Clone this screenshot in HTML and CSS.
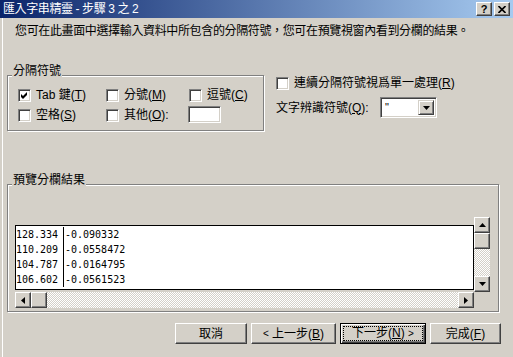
FILE: index.html
```html
<!DOCTYPE html>
<html lang="zh-Hant">
<head>
<meta charset="utf-8">
<title>匯入字串精靈</title>
<link rel="stylesheet" href="styles.css">
</head>
<body>
<div class="window">
  <div class="titlebar">
    <span class="title">匯入字串精靈 - 步驟 3 之 2</span>
    <div class="tbtns">
      <span class="tbtn help">?</span>
      <span class="tbtn close"><svg width="8" height="7" viewBox="0 0 8 7"><path d="M0.5 0 L7.5 7 M7.5 0 L0.5 7" stroke="#000" stroke-width="1.6"/></svg></span>
    </div>
  </div>

  <p class="intro">您可在此畫面中選擇輸入資料中所包含的分隔符號，您可在預覽視窗內看到分欄的結果。</p>

  <div class="options">
    <div class="group delim">
      <span class="legend">分隔符號</span>
      <div class="delim-grid">
        <label class="chk"><span class="cb"><svg width="11" height="11" viewBox="0 0 11 11"><path d="M2 4 L4 6 L8 2 L8 5 L4 9 L2 7 Z" fill="#000"/></svg></span><span>Tab 鍵(<u>T</u>)</span></label>
        <label class="chk"><span class="cb"></span><span>分號(<u>M</u>)</span></label>
        <label class="chk"><span class="cb"></span><span>逗號(<u>C</u>)</span></label>
        <label class="chk"><span class="cb"></span><span>空格(<u>S</u>)</span></label>
        <label class="chk"><span class="cb"></span><span>其他(<u>O</u>):</span></label>
        <span class="field"></span>
      </div>
    </div>
    <div class="right-opts">
      <label class="chk"><span class="cb"></span><span>連續分隔符號視爲單一處理(<u>R</u>)</span></label>
      <div class="qual">
        <span class="qual-label">文字辨識符號(<u>Q</u>):</span>
        <div class="combo">
          <span class="combo-val">"</span>
          <span class="combo-btn"><svg width="7" height="4" viewBox="0 0 7 4"><path d="M0 0 H7 L3.5 4 Z" fill="#000"/></svg></span>
        </div>
      </div>
    </div>
  </div>

  <div class="group preview">
    <span class="legend">預覽分欄結果</span>
    <div class="pv">
      <div class="pv-main">
        <div class="data">
          <div class="row"><span class="c1">128.334</span><span class="c2">-0.090332</span></div>
          <div class="row"><span class="c1">110.209</span><span class="c2">-0.0558472</span></div>
          <div class="row"><span class="c1">104.787</span><span class="c2">-0.0164795</span></div>
          <div class="row"><span class="c1">106.602</span><span class="c2">-0.0561523</span></div>
        </div>
      </div>
      <div class="vscroll">
        <span class="sbtn"><svg width="7" height="4" viewBox="0 0 7 4"><path d="M3.5 0 L7 4 H0 Z" fill="#000"/></svg></span>
        <span class="sbtn thumb"></span>
        <span class="track"></span>
        <span class="sbtn"><svg width="7" height="4" viewBox="0 0 7 4"><path d="M0 0 H7 L3.5 4 Z" fill="#000"/></svg></span>
      </div>
      <div class="hscroll">
        <span class="sbtn"><svg width="4" height="7" viewBox="0 0 4 7"><path d="M4 0 V7 L0 3.5 Z" fill="#000"/></svg></span>
        <span class="sbtn thumb"></span>
        <span class="track"></span>
        <span class="sbtn"><svg width="4" height="7" viewBox="0 0 4 7"><path d="M0 0 V7 L4 3.5 Z" fill="#000"/></svg></span>
      </div>
      <div class="corner"></div>
    </div>
  </div>

  <div class="buttons">
    <span class="btn w72">取消</span>
    <span class="btn w85"><span class="lt">&lt;</span>&nbsp;上一步(<u>B</u>)</span>
    <span class="btn w86 default"><span class="focus">下一步(<u>N</u>)&nbsp;<span class="lt">&gt;</span></span></span>
    <span class="btn w71">完成(<u>F</u>)</span>
  </div>
</div>
</body>
</html>
```
FILE: styles.css
```css
* { box-sizing: border-box; }
html, body { margin: 0; padding: 0; }
body {
  width: 513px;
  height: 357px;
  overflow: hidden;
  background: #d4d0c8;
  font-family: "Liberation Sans", "Noto Sans CJK TC", "Noto Sans CJK SC", sans-serif;
  font-size: 12px;
  color: #000;
  text-autospace: no-autospace;
}
u { text-decoration: underline; text-underline-offset: 1px; }

.window {
  width: 513px;
  height: 357px;
  background: #d4d0c8;
  box-shadow: inset 2px 0 #d4d0c8, inset 3px 0 #fff;
  display: flex;
  flex-direction: column;
  align-items: flex-start;
}

/* title bar */
.titlebar {
  width: 513px;
  height: 18px;
  flex: none;
  background: linear-gradient(to right, #0a246a, #a6caf0);
  display: flex;
  align-items: center;
  justify-content: space-between;
  padding: 0 3px 0 3px;
}
.title { color: #fff; line-height: 14px; white-space: nowrap; letter-spacing: -0.4px; }
.tbtns { display: flex; gap: 2px; }
.tbtn, .sbtn {
  background: #d4d0c8;
  border: 1px solid;
  border-color: #fff #404040 #404040 #fff;
  box-shadow: inset -1px -1px #808080;
  display: flex;
  align-items: center;
  justify-content: center;
}
.tbtn { width: 16px; height: 14px; }
.help {
  font-family: "Liberation Sans", sans-serif;
  font-weight: bold;
  font-size: 11px;
  line-height: 10px;
}

/* intro */
.intro {
  margin: 6px 0 0 15px;
  line-height: 14px;
  white-space: nowrap;
  letter-spacing: -0.36px;
}

/* group boxes */
.group {
  position: relative;
  border: 1px solid #808080;
  box-shadow: inset 1px 1px #fff, 1px 1px #fff;
}
.legend {
  position: absolute;
  top: -12px;
  left: 4px;
  padding: 0 1px;
  background: #d4d0c8;
  line-height: 14px;
  white-space: nowrap;
}

.options {
  display: flex;
  align-items: flex-start;
  margin: 37px 0 0 7px;
}
.delim { width: 257px; height: 56px; }
.delim-grid {
  display: grid;
  grid-template-columns: 88px 83px 60px;
  grid-auto-rows: 17px;
  row-gap: 3px;
  padding: 11px 0 0 10px;
}

.chk {
  display: flex;
  align-items: center;
  gap: 5px;
  white-space: nowrap;
  line-height: 15px;
}
.cb {
  width: 13px;
  height: 13px;
  flex: none;
  background: #fff;
  border: 1px solid;
  border-color: #808080 #fff #fff #808080;
  box-shadow: inset 1px 1px #404040, inset -1px -1px #d4d0c8;
}
.cb svg { display: block; }

.field, .combo {
  background: #fff;
  border: 1px solid;
  border-color: #808080 #fff #fff #808080;
  box-shadow: inset 1px 1px #404040, inset -1px -1px #d4d0c8;
}
.field { width: 33px; height: 17px; margin-left: -1px; margin-top: -1px; }

.right-opts {
  margin-left: 12px;
  padding-top: 1px;
  display: flex;
  flex-direction: column;
}
.right-opts > .chk { height: 15px; }
.qual {
  display: flex;
  align-items: center;
  margin-top: 6px;
  height: 21px;
}
.qual-label { width: 104px; white-space: nowrap; line-height: 14px; }
.combo {
  width: 57px;
  height: 21px;
  display: flex;
  align-items: stretch;
  padding: 2px;
}
.combo-val {
  flex: 1;
  padding-left: 2px;
  font-size: 11px;
  line-height: 14px;
}
.combo-btn {
  width: 16px;
  background: #d4d0c8;
  border: 1px solid;
  border-color: #d4d0c8 #404040 #404040 #d4d0c8;
  box-shadow: inset 1px 1px #fff, inset -1px -1px #808080;
  display: flex;
  align-items: center;
  justify-content: center;
}

/* preview */
.preview {
  width: 492px;
  height: 128px;
  margin: 53px 0 0 7px;
}
.pv {
  display: grid;
  grid-template-columns: 459px 16px;
  grid-template-rows: 75px 16px;
  margin: 32px 0 0 7px;
}
.pv-main { padding-top: 8px; }
.data {
  height: 65px;
  background: #fff;
  border: 1px solid #000;
  padding-top: 1px;
  font-family: "DejaVu Sans Mono", monospace;
  font-size: 10px;
  overflow: hidden;
}
.row { display: flex; height: 15px; line-height: 15px; }
.c1 { width: 48px; border-right: 1px solid #000; }
.c2 { padding-left: 1px; }

.vscroll { display: flex; flex-direction: column; }
.vscroll .sbtn { height: 16px; flex: none; }
.hscroll { display: flex; }
.hscroll .sbtn { width: 16px; flex: none; }
.track {
  flex: 1;
  background: repeating-conic-gradient(#fff 0 25%, #d4d0c8 0 50%) 0 0 / 2px 2px;
}
.corner { background: #d4d0c8; }

/* buttons */
.buttons {
  display: flex;
  gap: 4px;
  margin: 11px 0 0 175px;
}
.btn {
  height: 21px;
  background: #d4d0c8;
  border: 1px solid;
  border-color: #fff #404040 #404040 #fff;
  box-shadow: inset -1px -1px #808080;
  display: flex;
  align-items: center;
  justify-content: center;
  white-space: nowrap;
  line-height: 14px;
}
.lt { font-size: 10px; }
.btn.default {
  border-color: #000;
  box-shadow: inset 1px 1px #fff, inset -1px -1px #404040, inset -2px -2px #808080;
}
.focus {
  border: 1px dotted #000;
  padding: 0 8px;
  line-height: 13px;
}
.w72 { width: 72px; }
.w85 { width: 85px; }
.w86 { width: 86px; }
.w71 { width: 71px; }
```
